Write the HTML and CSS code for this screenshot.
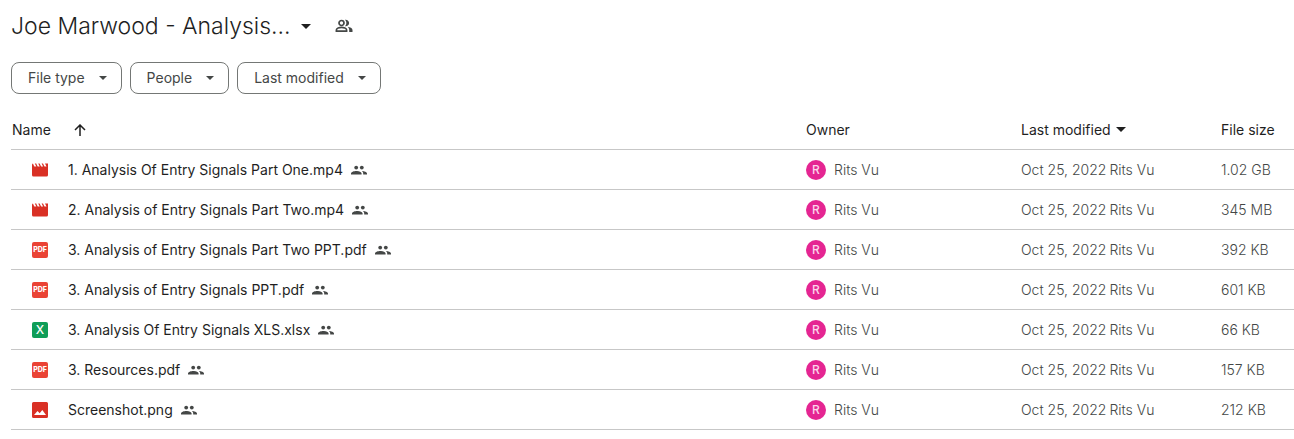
FILE: index.html
```html
<!DOCTYPE html>
<html lang="en">
<head>
<meta charset="utf-8">
<title>Joe Marwood - Analysis</title>
<meta name="viewport" content="width=device-width, initial-scale=1">
<link rel="stylesheet" href="styles.css">
</head>
<body>
<svg class="sprite" aria-hidden="true">
  <symbol id="caret" viewBox="0 0 10 5"><path d="M0 0h10L5 5z"/></symbol>
  <symbol id="people" viewBox="0 0 16 10"><circle cx="5.200" cy="2.600" r="1.900"/><circle cx="10.800" cy="2.600" r="1.900"/><path d="M0 9.500V8.500C0 6.900 3 6 5.300 6s5.300.9 5.300 2.500v1zM10.900 6c2.200.1 5.100 1 5.100 2.500v1h-3.800v-1c0-1.100-.5-1.900-1.300-2.500z"/></symbol>
  <symbol id="video" viewBox="0 0 16 16"><path d="M13 1.500l1.500 3h-2l-1.500-3h-1.400l1.500 3h-2l-1.500-3H6.200l1.500 3h-2l-1.500-3H2.800l1.500 3h-2L.9 1.600Q0 1.900 0 3v10q0 1.500 1.500 1.500h13Q16 14.500 16 13V1.500z"/></symbol>
  <symbol id="image" viewBox="0 0 16 16"><path fill-rule="evenodd" d="M1.500 0h13Q16 0 16 1.500v13q0 1.500-1.500 1.500h-13Q0 16 0 14.500v-13Q0 0 1.500 0zM2 13h12l-3.700-5-2.600 3.300L5.500 9z"/></symbol>
</svg>
<main class="drive">
  <header class="heading">
    <h1 class="title">Joe Marwood - Analysis...</h1>
    <button class="icon-button" aria-label="Folder actions"><svg class="caret"><use href="#caret"/></svg></button>
    <button class="icon-button share" aria-label="Manage access"><svg class="share-icon" viewBox="0 0 18 14"><g fill="none" stroke="currentColor" stroke-width="1.700"><circle cx="6.500" cy="4" r="2.500"/><path d="M1.400 12.200v-1.300c0-1.600 3-2.500 5.100-2.500s5.100.9 5.100 2.500v1.300z"/></g><path d="M10 .8a3.300 3.300 0 1 1 0 6.400 4.400 4.400 0 0 0 0-6.400zM12.700 7.800c2.400.4 4.800 1.400 4.800 3.200v2h-3.300v-2c0-1.300-.6-2.400-1.500-3.200z"/></svg></button>
  </header>
  <div class="filters">
    <button class="chip">File type<svg class="caret-small"><use href="#caret"/></svg></button>
    <button class="chip">People<svg class="caret-small"><use href="#caret"/></svg></button>
    <button class="chip">Last modified<svg class="caret-small"><use href="#caret"/></svg></button>
  </div>
  <table class="files">
    <colgroup><col><col class="col-owner"><col class="col-modified"><col class="col-size"></colgroup>
    <thead>
      <tr>
        <th scope="col"><div class="name-head">Name<button class="icon-button" aria-label="Reverse sort direction"><svg class="arrow" viewBox="0 0 12 12"><path d="M6 12V1M1 6l5-5 5 5"/></svg></button></div></th>
        <th scope="col">Owner</th>
        <th scope="col"><button class="sort">Last modified<svg class="caret"><use href="#caret"/></svg></button></th>
        <th scope="col">File size</th>
      </tr>
    </thead>
    <tbody>
      <tr><td><div class="file"><svg class="type red"><use href="#video"/></svg>1. Analysis Of Entry Signals Part One.mp4<svg class="people"><use href="#people"/></svg></div></td><td><div class="owner"><span class="avatar">R</span>Rits Vu</div></td><td><div class="modified"><span>Oct 25, 2022</span><span>Rits Vu</span></div></td><td>1.02 GB</td></tr>
      <tr><td><div class="file"><svg class="type red"><use href="#video"/></svg>2. Analysis of Entry Signals Part Two.mp4<svg class="people"><use href="#people"/></svg></div></td><td><div class="owner"><span class="avatar">R</span>Rits Vu</div></td><td><div class="modified"><span>Oct 25, 2022</span><span>Rits Vu</span></div></td><td>345 MB</td></tr>
      <tr><td><div class="file"><span class="type badge pdf">PDF</span>3. Analysis of Entry Signals Part Two PPT.pdf<svg class="people"><use href="#people"/></svg></div></td><td><div class="owner"><span class="avatar">R</span>Rits Vu</div></td><td><div class="modified"><span>Oct 25, 2022</span><span>Rits Vu</span></div></td><td>392 KB</td></tr>
      <tr><td><div class="file"><span class="type badge pdf">PDF</span>3. Analysis of Entry Signals PPT.pdf<svg class="people"><use href="#people"/></svg></div></td><td><div class="owner"><span class="avatar">R</span>Rits Vu</div></td><td><div class="modified"><span>Oct 25, 2022</span><span>Rits Vu</span></div></td><td>601 KB</td></tr>
      <tr><td><div class="file"><span class="type badge sheet">X</span>3. Analysis Of Entry Signals XLS.xlsx<svg class="people"><use href="#people"/></svg></div></td><td><div class="owner"><span class="avatar">R</span>Rits Vu</div></td><td><div class="modified"><span>Oct 25, 2022</span><span>Rits Vu</span></div></td><td>66 KB</td></tr>
      <tr><td><div class="file"><span class="type badge pdf">PDF</span>3. Resources.pdf<svg class="people"><use href="#people"/></svg></div></td><td><div class="owner"><span class="avatar">R</span>Rits Vu</div></td><td><div class="modified"><span>Oct 25, 2022</span><span>Rits Vu</span></div></td><td>157 KB</td></tr>
      <tr><td><div class="file"><svg class="type red"><use href="#image"/></svg>Screenshot.png<svg class="people"><use href="#people"/></svg></div></td><td><div class="owner"><span class="avatar">R</span>Rits Vu</div></td><td><div class="modified"><span>Oct 25, 2022</span><span>Rits Vu</span></div></td><td>212 KB</td></tr>
    </tbody>
  </table>
</main>
</body>
</html>
```
FILE: styles.css
```css
* { box-sizing: border-box; }
body {
  margin: 0;
  background: #fff;
  color: #1f1f1f;
  font: 400 14px/20px Inter, "Liberation Sans", sans-serif;
}
button {
  padding: 0;
  border: 0;
  background: none;
  color: inherit;
  font: inherit;
  cursor: pointer;
}
svg { display: block; flex: none; fill: currentColor; }
.sprite { position: absolute; width: 0; height: 0; }
.drive { padding: 10px 0 0 11px; }
.heading { display: flex; align-items: center; }
.title { margin: 0 10px 0 0; font-size: 23px; line-height: 32px; font-weight: 300; }
.share { margin-left: 24px; color: #444746; }
.share-icon { width: 18px; height: 14px; }
.caret { width: 10px; height: 5px; }
.caret-small { width: 8px; height: 4px; }
.filters { display: flex; gap: 8px; margin-top: 20px; }
.chip {
  display: flex;
  align-items: center;
  gap: 14px;
  height: 32px;
  padding: 0 14px 0 16px;
  border: 1px solid #747775;
  border-radius: 8px;
  color: #444746;
}
.files {
  width: 100%;
  margin-top: 16px;
  border-collapse: separate;
  border-spacing: 0;
  table-layout: fixed;
}
.col-owner { width: 215px; }
.col-modified { width: 200px; }
.col-size { width: 73px; }
th, td {
  height: 40px;
  padding: 0;
  border-bottom: 1px solid #c7c7c7;
  text-align: left;
  white-space: nowrap;
}
th { font-weight: 400; }
th:first-child { padding-left: 1px; }
td { color: #444746; font-weight: 300; }
.name-head { display: flex; align-items: center; gap: 23px; }
.arrow { width: 12px; height: 12px; fill: none; stroke: #1f1f1f; stroke-width: 1.5; }
.sort { display: flex; align-items: center; gap: 5px; }
.file { display: flex; align-items: center; padding-left: 21px; color: #1f1f1f; font-weight: 400; }
.type { width: 16px; height: 16px; margin-right: 20px; }
.red { color: #d93025; }
.people { width: 16px; height: 10px; margin-left: 8px; color: #444746; }
.badge {
  display: flex;
  flex: none;
  align-items: center;
  justify-content: center;
  border-radius: 2px;
  color: #fff;
}
.pdf { background: #ea4335; font-size: 7px; line-height: 16px; font-weight: 800; }
.sheet { background: #0f9d58; font-size: 12px; line-height: 16px; font-weight: 500; }
.owner { display: flex; align-items: center; gap: 8px; }
.avatar {
  width: 20px;
  height: 20px;
  border-radius: 50%;
  background: #e52592;
  color: #fbd5ea;
  font-size: 12px;
  font-weight: 500;
  text-align: center;
}
.modified { display: flex; gap: 3px; }
```
